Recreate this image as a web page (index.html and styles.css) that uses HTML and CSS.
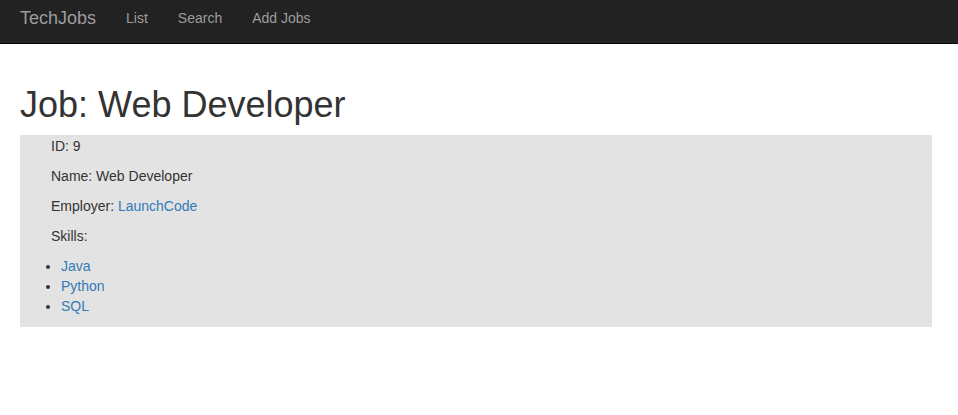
FILE: index.html
```html
<!DOCTYPE html>
<html lang="en">
<head>
<meta charset="utf-8">
<title>TechJobs</title>
<link rel="stylesheet" href="styles.css">
</head>
<body>
<nav class="navbar">
  <a class="brand" href="#">TechJobs</a>
  <ul class="nav-links">
    <li><a href="#">List</a></li>
    <li><a href="#">Search</a></li>
    <li><a href="#">Add Jobs</a></li>
  </ul>
</nav>
<main class="content">
  <h1 class="title">Job: Web Developer</h1>
  <div class="job-box">
    <p class="row">ID: 9</p>
    <p class="row">Name: Web Developer</p>
    <p class="row">Employer: <a href="#">LaunchCode</a></p>
    <p class="row">Skills:</p>
    <ul class="skills">
      <li><a href="#">Java</a></li>
      <li><a href="#">Python</a></li>
      <li><a href="#">SQL</a></li>
    </ul>
  </div>
</main>
</body>
</html>
```
FILE: styles.css
```css
* { box-sizing: border-box; }
html, body { margin: 0; padding: 0; }
body {
  font-family: "Liberation Sans", Arial, sans-serif;
  font-size: 14px;
  line-height: 20px;
  color: #333;
  background: #fff;
}
a { color: #337ab7; text-decoration: none; }

.navbar {
  display: flex;
  align-items: flex-start;
  height: 44px;
  background: #222;
  border-bottom: 1px solid #080808;
  padding: 0 0 0 20px;
}
.brand {
  color: #9d9d9d;
  font-size: 18px;
  line-height: 20px;
  padding-top: 8px;
}
.nav-links {
  display: flex;
  list-style: none;
  margin: 0 0 0 15px;
  padding: 0;
}
.nav-links a {
  display: block;
  color: #9d9d9d;
  padding: 8px 15px 0;
  line-height: 20px;
}

.content {
  padding: 0 26px 0 20px;
}
.title {
  font-size: 36px;
  font-weight: 500;
  line-height: 1.1;
  margin: 41px 0 10px;
  color: #333;
}
.job-box {
  background: #e3e3e3;
  padding: 1px 0;
  overflow: hidden;
}
.row {
  margin: 0 0 10px;
  padding-left: 31px;
}
.skills {
  margin: 0 0 10px;
  padding-left: 41px;
}
```
